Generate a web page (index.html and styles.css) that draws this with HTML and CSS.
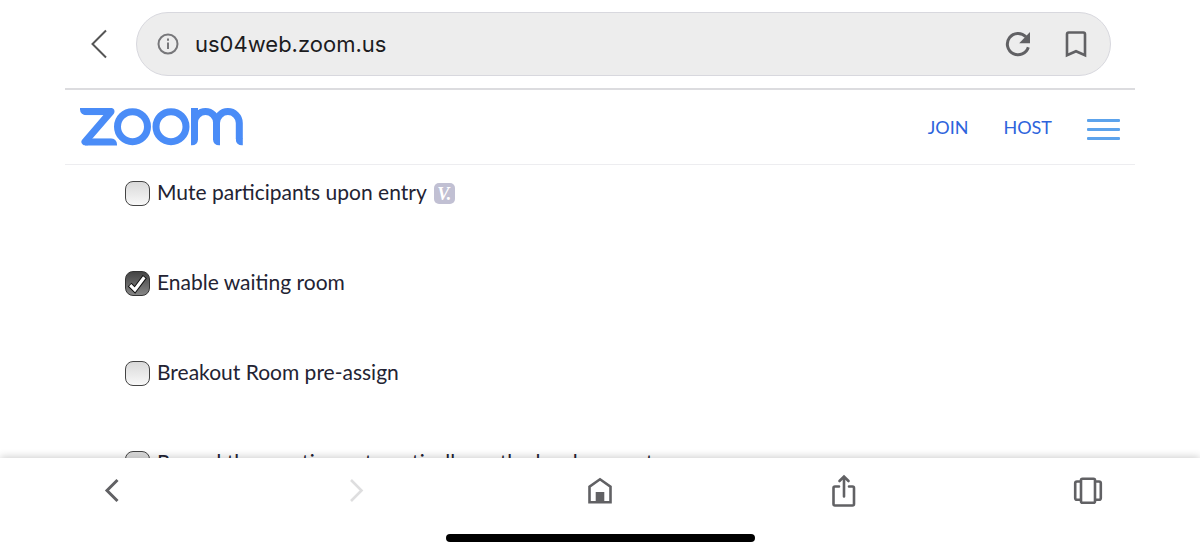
FILE: index.html
```html
<!DOCTYPE html>
<html lang="en">
<head>
    <meta charset="UTF-8">
    <meta name="viewport" content="width=device-width, initial-scale=1.0">
    <title>Meeting Settings - Zoom</title>
    <link rel="stylesheet" href="styles.css">
</head>
<body>
    <div class="address-bar">
        <button class="icon-btn back-btn" type="button" aria-label="Back">
            <svg width="16" height="30" viewBox="0 0 16 30"><path d="M15 1.5 1.5 15 15 28.5"/></svg>
        </button>
        <div class="url-field">
            <svg class="info-icon" width="22" height="22" viewBox="0 0 22 22">
                <circle cx="11" cy="11" r="9.5"/>
                <path d="M11 9.500v6.500M11 5.500v2.200"/>
            </svg>
            <input class="url-input" type="text" value="us04web.zoom.us" aria-label="Address">
            <button class="icon-btn" type="button" aria-label="Reload">
                <svg width="26" height="26" viewBox="0 0 26 26">
                    <path class="line" d="M23.3 16.2A10.7 10.7 0 1 1 20.9 5.8"/>
                    <path class="fill" d="M25 1v11.200H14.200z"/>
                </svg>
            </button>
            <button class="icon-btn" type="button" aria-label="Bookmark">
                <svg width="22" height="28" viewBox="0 0 22 28"><path class="line thin" d="M2 25.200V4.200Q2 2.500 3.700 2.500H18.300Q20 2.500 20 4.200V25.200L11 21.200z"/></svg>
            </button>
        </div>
    </div>

    <div class="page">
        <header class="site-header">
            <a class="logo" href="#" aria-label="Zoom">
                <svg width="164" height="38" viewBox="0 0 164 38">
                    <svg x="0" y="0" width="32" height="7.200">
                        <rect class="solid" x="0" y="-8" width="50" height="15.200" rx="6"/>
                    </svg>
                    <polyline points="29,3.600 31,3.600 5,33.800 8,33.800"/>
                    <svg x="5" y="30.200" width="32" height="7.200">
                        <rect class="solid" x="-14" y="0" width="46" height="15.200" rx="6"/>
                    </svg>
                    <circle cx="52.500" cy="18.700" r="15"/>
                    <circle cx="91" cy="18.700" r="15"/>
                    <line x1="114.500" y1="0" x2="114.500" y2="31"/>
                    <svg x="110" y="0" width="54" height="31">
                        <rect x="4.500" y="3.600" width="22" height="60" rx="11"/>
                        <rect x="26.500" y="3.600" width="22.800" height="60" rx="11.400"/>
                    </svg>
                    <svg x="111" y="30.500" width="7" height="7">
                        <rect class="solid" x="-9" y="-10" width="16" height="17" rx="6"/>
                    </svg>
                    <svg x="133" y="30.500" width="7" height="7">
                        <rect class="solid" x="0" y="-10" width="16" height="17" rx="6"/>
                    </svg>
                    <svg x="155.800" y="30.500" width="7" height="7">
                        <rect class="solid" x="0" y="-10" width="16" height="17" rx="6"/>
                    </svg>
                </svg>
            </a>
            <nav class="nav">
                <a href="#">JOIN</a>
                <a href="#">HOST</a>
                <button class="menu-btn" type="button" aria-label="Menu">
                    <span></span>
                    <span></span>
                    <span></span>
                </button>
            </nav>
        </header>

        <main class="options">
            <div class="option">
                <input type="checkbox" id="mute">
                <label for="mute">Mute participants upon entry</label>
                <span class="badge">V.</span>
            </div>
            <div class="option">
                <input type="checkbox" id="waiting" checked>
                <label for="waiting">Enable waiting room</label>
            </div>
            <div class="option">
                <input type="checkbox" id="breakout">
                <label for="breakout">Breakout Room pre-assign</label>
            </div>
            <div class="option">
                <input type="checkbox" id="record">
                <label for="record">Record the meeting automatically on the local computer</label>
            </div>
        </main>
    </div>

    <footer class="toolbar">
        <div class="toolbar-buttons">
            <button class="icon-btn" type="button" aria-label="Previous page">
                <svg width="30" height="32" viewBox="0 0 30 32"><path class="line" d="M20.500 5 10 15.500 20.500 26"/></svg>
            </button>
            <button class="icon-btn" type="button" aria-label="Next page" disabled>
                <svg width="30" height="32" viewBox="0 0 30 32"><path class="line thin" d="M10 5 20.500 15.500 10 26"/></svg>
            </button>
            <button class="icon-btn" type="button" aria-label="Home">
                <svg width="30" height="32" viewBox="0 0 30 32">
                    <path class="line thin" d="M4.500 27.200V11.700L15 4.300l10.500 7.400v15.500z"/>
                    <path class="fill" d="M10.700 17h8.600v10.500h-8.600z"/>
                </svg>
            </button>
            <button class="icon-btn" type="button" aria-label="Share">
                <svg width="30" height="36" viewBox="0 0 30 36">
                    <path class="line thin round" d="M10 13.500H6Q4.500 13.500 4.500 15v16q0 1.500 1.500 1.500h17.500q1.500 0 1.500-1.500V15q0-1.500-1.500-1.500H20M15 23.500V4M10.500 8 15 3.500 19.500 8"/>
                </svg>
            </button>
            <button class="icon-btn" type="button" aria-label="Tabs">
                <svg width="30" height="32" viewBox="0 0 30 32">
                    <rect class="line thin" x="8" y="3.700" width="14" height="24" rx="1.500"/>
                    <path class="line thin" d="M8 6.500H4Q2.200 6.500 2.200 8.300V23q0 1.800 1.800 1.800H8M22 6.500h4q1.800 0 1.800 1.800V23q0 1.800-1.800 1.800H22"/>
                </svg>
            </button>
        </div>
        <div class="home-indicator"></div>
    </footer>
</body>
</html>
```
FILE: styles.css
```css
* {
    margin: 0;
    padding: 0;
    box-sizing: border-box;
}

body {
    font-family: Lato, 'Open Sans', sans-serif;
    background: #fff;
    color: #232333;
    display: flex;
    flex-direction: column;
    height: 100vh;
    overflow: hidden;
}

svg {
    display: block;
}

button {
    background: none;
    border: none;
}

a {
    text-decoration: none;
}

.icon-btn {
    display: flex;
    align-items: center;
    justify-content: center;
    color: #616164;
}

.icon-btn:disabled {
    color: #dededf;
}

.line {
    fill: none;
    stroke: currentColor;
    stroke-width: 3;
}

.thin {
    stroke-width: 2.6;
}

.round {
    stroke-linecap: round;
}

.fill {
    fill: currentColor;
}

/* Address bar */
.address-bar {
    display: flex;
    align-items: center;
    gap: 29px;
    margin: 0 65px;
    padding: 12px 24px 12px 26px;
    border-bottom: 2px solid #dcdcdf;
}

.back-btn svg {
    fill: none;
    stroke: #555;
    stroke-width: 2;
}

.url-field {
    flex: 1;
    display: flex;
    align-items: center;
    gap: 34px;
    height: 64px;
    padding: 0 23px 0 20px;
    background: #ededed;
    border: 1px solid #d8d8de;
    border-radius: 32px;
}

.info-icon {
    fill: none;
    stroke: #77777a;
    stroke-width: 2;
}

.url-input {
    flex: 1;
    min-width: 0;
    margin-left: -18px;
    background: none;
    border: none;
    outline: none;
    font-family: Inter, Roboto, sans-serif;
    font-size: 22px;
    color: #1c1c1e;
}

/* Site header */
.page {
    flex: 1;
    min-height: 0;
    margin: 0 65px;
    overflow: hidden;
}

.site-header {
    display: flex;
    align-items: center;
    justify-content: space-between;
    height: 75px;
    padding: 0 15px;
    border-bottom: 1px solid #ededf0;
}

.logo svg {
    fill: none;
    stroke: #4a8cf7;
    stroke-width: 7;
    stroke-linejoin: round;
}

.logo .solid {
    fill: #4a8cf7;
    stroke: none;
}

.nav {
    display: flex;
    align-items: center;
    gap: 35px;
}

.nav a {
    color: #2d63dc;
    font-size: 18px;
}

.menu-btn {
    display: flex;
    flex-direction: column;
    gap: 6px;
    padding-top: 4px;
}

.menu-btn span {
    width: 33px;
    height: 3px;
    border-radius: 1px;
    background: #5ca3ec;
}

/* Meeting options */
.options {
    display: flex;
    flex-direction: column;
    gap: 60px;
    padding: 13px 60px 0;
}

.option {
    display: flex;
    align-items: center;
    flex-shrink: 0;
    gap: 7px;
    height: 30px;
    font-size: 21px;
    line-height: 24px;
    white-space: nowrap;
}

.option label {
    padding-bottom: 2px;
}

.option input {
    appearance: none;
    width: 25px;
    height: 25px;
    border: 1px solid #444;
    border-radius: 8px;
    background: linear-gradient(#d9d9d9, #f8f8f8);
}

.option input:checked {
    border-color: #333;
    background:
        url("data:image/svg+xml,%3Csvg xmlns='http://www.w3.org/2000/svg' viewBox='0 0 22 22' fill='none'%3E%3Cpath d='M3.500 12 8.500 17 18 4.500' stroke='%23111' stroke-width='5'/%3E%3Cpath d='M4 12.500 8.500 17 17.500 5' stroke='%23fff' stroke-width='3'/%3E%3C/svg%3E"),
        linear-gradient(#444, #858585);
}

.badge {
    width: 21px;
    height: 21px;
    border-radius: 5px;
    background: #c1c0d3;
    color: #fff;
    font-family: 'Liberation Serif', serif;
    font-size: 18px;
    font-style: italic;
    font-weight: 700;
    line-height: 22px;
    text-align: center;
}

/* Bottom toolbar */
.toolbar {
    position: relative;
    display: flex;
    flex-direction: column;
    justify-content: space-between;
    align-items: center;
    height: 96px;
    padding: 14px 0 12px;
    background: #fff;
    box-shadow: 0 -1px 8px rgba(0, 0, 0, 0.2);
}

.toolbar-buttons {
    display: flex;
    align-items: center;
    justify-content: space-between;
    width: 100%;
    height: 38px;
    padding: 0 97px;
}

.home-indicator {
    width: 309px;
    height: 8px;
    border-radius: 4px;
    background: #000;
}
```
